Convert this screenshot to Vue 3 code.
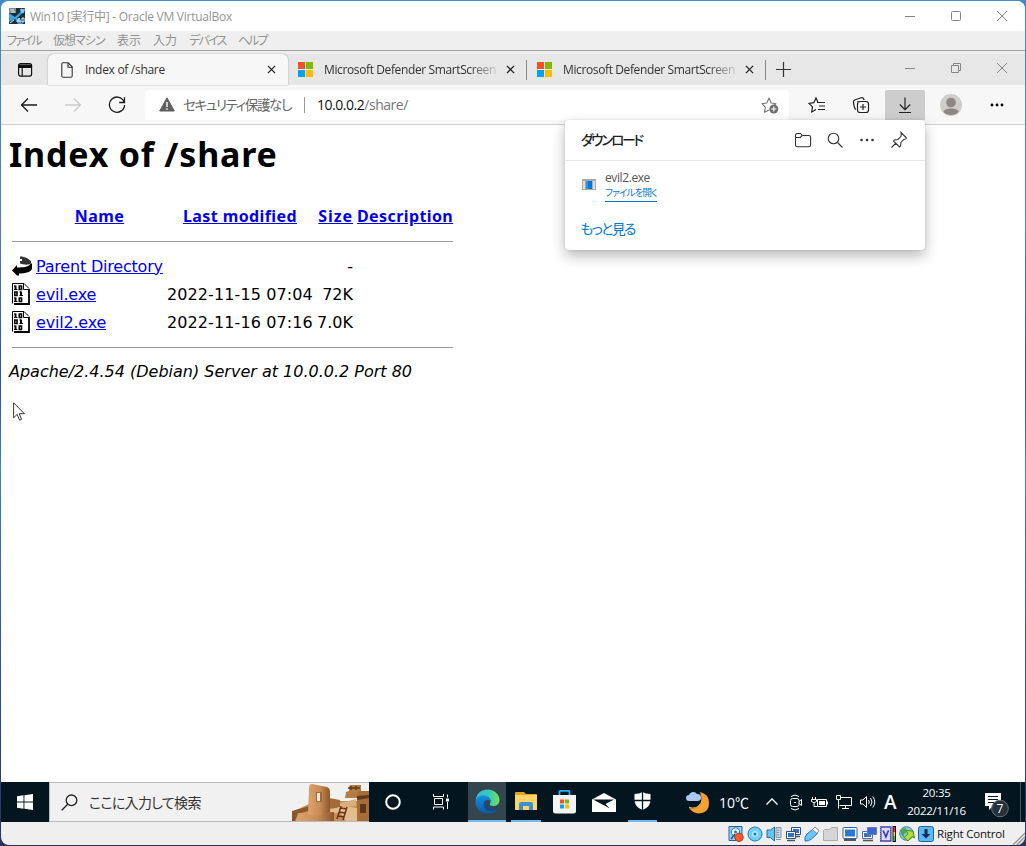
<template>
  <div class="desktop">
    <div class="vm-window">
      <header class="vm-title">
        <svg class="vm-logo" viewBox="0 0 16 16">
          <rect width="16" height="16" fill="#173040" />
          <path d="M0 5l6 4 10-9v3l-8 7 6 6H9l-3-5-6 3z" fill="#3f9fe0" />
          <path d="M0 0h7v5H0z" fill="#7d8b93" />
          <path d="M1 2h4M2 4h4M12 1l3 1M1 15l4-3" stroke="#e4edf2" />
          <path d="M8 14l2-4 2 4m-3-1h2m2-3v4h2v-4z" stroke="#dff1fb" fill="none" />
          <path d="M11 1h4v4h-3z" fill="#7fc4ef" />
        </svg>
        <span class="vm-name">Win10 [実行中] - Oracle VM VirtualBox</span>
        <div class="win-controls outer">
          <svg viewBox="0 0 12 12"><path d="M1 6.5h10" /></svg>
          <svg viewBox="0 0 12 12"><rect x="1.5" y="1.5" width="9" height="9" rx="1" /></svg>
          <svg viewBox="0 0 12 12"><path d="M1 1l10 10M11 1L1 11" /></svg>
        </div>
      </header>
      <nav class="vm-menu">
        <span v-for="(m, i) in menus" :key="m" :class="'menu-' + i">{{ m }}</span>
      </nav>

      <section class="browser">
        <div class="tab-strip">
          <div class="tab-actions">
            <svg width="16" height="16" viewBox="0 0 16 16" fill="none" stroke="#111" stroke-width="1.2">
              <rect x="1.6" y="1.6" width="13" height="12.5" rx="2" />
              <path d="M2 3h12v2.4H2z" fill="#111" />
              <path d="M5.2 5v9" />
            </svg>
          </div>
          <div class="tab active">
            <svg class="doc" width="14" height="16" viewBox="0 0 14 16" fill="none" stroke="#333" stroke-width="1.1">
              <path d="M3 .8h5.2l4 4V14a1.2 1.2 0 0 1-1.2 1.2H3A1.2 1.2 0 0 1 1.8 14V2A1.2 1.2 0 0 1 3 .8zM8 .8v4.4h4.2" />
            </svg>
            <span class="tab-text index">Index of /share</span>
            <svg class="tab-x" viewBox="0 0 10 10"><path d="M1 1l8 8M9 1L1 9" /></svg>
          </div>
          <div v-for="n in 2" :key="n" class="tab">
            <svg class="ms" width="15" height="15" viewBox="0 0 15 15">
              <path d="M0 0h7v7H0z" fill="#f25022" />
              <path d="M8 0h7v7H8z" fill="#7fba00" />
              <path d="M0 8h7v7H0z" fill="#00a4ef" />
              <path d="M8 8h7v7H8z" fill="#ffb900" />
            </svg>
            <span class="tab-text faded">Microsoft Defender SmartScreen</span>
            <svg class="tab-x" viewBox="0 0 10 10"><path d="M1 1l8 8M9 1L1 9" /></svg>
            <i class="tab-sep"></i>
          </div>
          <svg class="plus" viewBox="0 0 15 15"><path d="M7.5 0v15M0 7.5h15" /></svg>
          <div class="win-controls inner">
            <svg viewBox="0 0 12 12"><path d="M1 6.5h10" /></svg>
            <svg viewBox="0 0 12 12"><path d="M1.5 3.5h7v7h-7zM3.5 3.5v-2h7v7h-2" /></svg>
            <svg viewBox="0 0 12 12"><path d="M1 1l10 10M11 1L1 11" /></svg>
          </div>
        </div>

        <div class="toolbar">
          <svg class="nav" viewBox="0 0 18 18"><path d="M17 9H1.500M8 2.500L1.500 9 8 15.500" /></svg>
          <svg class="nav off" viewBox="0 0 18 18"><path d="M1 9h15.500M10 2.500L16.500 9 10 15.500" /></svg>
          <svg class="nav" viewBox="0 0 18 18"><path d="M16.200 6.200A7.600 7.600 0 1 0 16.600 9M16.500 1.200v5.300h-5.300" /></svg>
          <div class="address">
            <svg class="warn" width="16" height="15" viewBox="0 0 16 15">
              <path d="M8 .8L15.300 14H.7z" fill="#5f5f5f" stroke="#5f5f5f" stroke-linejoin="round" />
              <path d="M8 5v5M8 11.200v1.500" stroke="#fff" stroke-width="1.400" />
            </svg>
            <span class="insecure">セキュリティ保護なし</span>
            <i class="addr-sep"></i>
            <span class="url">10.0.0.2<em>/share/</em></span>
            <svg class="star-add" width="18" height="18" viewBox="0 0 18 18" fill="none" stroke="#777" stroke-width="1.100">
              <path d="M8 14l-4.500 2.300.9-5L1 7.700l4.800-.7L8 2l2.200 5 4.800.7-2 1.800" stroke-linejoin="round" />
              <circle cx="12.800" cy="13" r="4.500" fill="#6e6e6e" stroke="none" />
              <path d="M12.800 10.500v5M10.300 13h5" stroke="#fff" />
            </svg>
          </div>
          <div class="tool-buttons">
            <svg viewBox="0 0 18 18">
              <path d="M10 6.500L8 2 5.800 6.700 1 7.500l3.500 3.400-.8 5L8 13.400M9 6.500h8M11 10h6M10 13.500h7" />
            </svg>
            <svg viewBox="0 0 18 18">
              <path d="M4 13.500C2 12.500 2.200 10 1.600 7.500 1 5.300 1.300 4.300 3.200 3.700l6-1.900c1.700-.4 2.500.2 3 2.200M6 6V5" />
              <rect x="5.500" y="5.500" width="11" height="11" rx="2.500" />
              <path d="M11 8v6M8 11h6" />
            </svg>
            <div class="dl-button"><svg viewBox="0 0 18 18"><path d="M9 1.500v12M3.800 8.500L9 13.700l5.200-5.200M3 16.500h12" /></svg></div>
          </div>
          <svg class="avatar" viewBox="0 0 22 22">
            <circle cx="11" cy="11" r="11" fill="#cfcdca" />
            <circle cx="11" cy="8.500" r="4.800" fill="#8c8783" />
            <path d="M3.200 17.800c1.500-4.500 14.100-4.500 15.600 0a11 11 0 0 1-15.600 0z" fill="#8c8783" />
          </svg>
          <svg class="dots" viewBox="0 0 14 4"><circle cx="2" cy="2" r="1.400" /><circle cx="7" cy="2" r="1.400" /><circle cx="12" cy="2" r="1.400" /></svg>
        </div>

        <aside class="downloads">
          <div class="dl-head">
            <b>ダウンロード</b>
            <svg viewBox="0 0 18 18"><path d="M1.500 4.500c0-1.300.5-2 1.800-2h3.200l1.800 2h6.500c1.200 0 1.800.6 1.800 1.800V14c0 1.200-.6 1.800-1.800 1.800H3.300c-1.200 0-1.800-.6-1.800-1.800zM1.500 6.500h4.700l2-2" /></svg>
            <svg viewBox="0 0 18 18"><circle cx="7.500" cy="7.500" r="5.300" /><path d="M11.500 11.500l5 5" /></svg>
            <svg class="solid" viewBox="0 0 18 18"><circle cx="3.500" cy="9" r="1.300" /><circle cx="9" cy="9" r="1.300" /><circle cx="14.500" cy="9" r="1.300" /></svg>
            <svg viewBox="0 0 18 18"><path d="M11 1.500l5.500 5.500-1 1-1.500.2-3 3.300-.5 3.500-1 1-6-6 1-1 3.500-.5 3-3.200.2-1.800zM6 12l-4.500 4.500" /></svg>
          </div>
          <div class="dl-item">
            <svg width="14" height="11" viewBox="0 0 14 11">
              <path d="M0 0h14v11H0z" fill="#aaa" />
              <path d="M1 2h2v8H1zM11 2h2v8h-2z" fill="#ddd" />
              <path d="M4 2h6v8H4z" fill="#0078d7" />
              <path d="M4 2h2v8H4z" fill="#2c92e6" />
            </svg>
            <div class="dl-text">
              <span>evil2.exe</span>
              <a>ファイルを開く</a>
            </div>
          </div>
          <a class="more">もっと見る</a>
        </aside>

        <main class="page">
          <h1>Index of /share</h1>
          <div class="listing">
            <div class="row head">
              <span></span><a>Name</a><a class="mod">Last modified</a><a class="siz">Size</a><a class="desc">Description</a>
            </div>
            <hr />
            <div v-for="f in files" :key="f.name" class="row">
              <svg v-if="f.up" class="up" viewBox="0 0 20 22">
                <path d="M19 8l1 1v5c-2 3.500-7 4.500-13 4.500V20.500H5L0 15.500 5 10v2.500c7 0 12-.5 14-4.500z" fill="#000" />
                <path d="M8 1.500h2l5 1.500 4 3v2.500c-4 2-7 1-11 0V6h2V4H8z" fill="#333" />
              </svg>
              <svg v-else class="bin" viewBox="0 0 18 22" fill="none" stroke="#000">
                <path d="M.5.5h11l6 6v14H.5z" fill="#fff" stroke="none" />
                <path d="M.5 20.500V.5h11.500l5 5" />
                <path d="M11.500.5v6h5" />
                <path d="M17 6v15H2" stroke-width="1.800" />
                <path d="M3.500 2.500v4.500M9 8.500v4.500M3.500 14.500V19" stroke-width="2" />
                <path d="M2 3h1.500M2 6.500h3.500M7.500 9h1.500M7.500 12.500H11M2 15h1.500M2 18.500h3.500" />
                <path d="M7.300 3h2.200v3.500H7.300zM2.800 9H5v3.500H2.800zM7.300 15h2.200v3.500H7.300z" stroke-width="1.600" />
              </svg>
              <a>{{ f.name }}</a>
              <span class="mod">{{ f.modified }}</span>
              <span class="siz">{{ f.size }}</span>
            </div>
            <hr class="last" />
          </div>
          <address>Apache/2.4.54 (Debian) Server at 10.0.0.2 Port 80</address>
          <svg class="cursor" viewBox="0 0 12 19"><path d="M.6.800v15l3.600-3.400 2.400 5.800 2-.9-2.400-5.600h5.200z" fill="#fff" stroke="#222" stroke-width=".9" /></svg>
        </main>
      </section>

      <footer class="taskbar">
        <div class="start">
          <svg width="16" height="16" viewBox="0 0 16 16" fill="#fff"><path d="M0 2.200l6.500-.9v6.200H0zM7.400 1.200L16 0v7.500H7.400zM0 8.400h6.500v6.300L0 13.800zM7.400 8.400H16V16l-8.600-1.200z" /></svg>
        </div>
        <div class="search">
          <svg width="17" height="17" viewBox="0 0 17 17" fill="none" stroke="#222" stroke-width="1.300"><circle cx="10.500" cy="6.300" r="5.300" /><path d="M6.700 10.200L.7 16.200" /></svg>
          <span>ここに入力して検索</span>
          <svg class="village" width="78" height="38" viewBox="0 0 78 38">
            <defs>
              <linearGradient id="clay" x1="0" x2="1"><stop offset="0" stop-color="#dda46f" /><stop offset=".55" stop-color="#c88c55" /><stop offset="1" stop-color="#8d572b" /></linearGradient>
            </defs>
            <path d="M1 29l17-8 6-3h54v20H1z" fill="#c38b57" />
            <path d="M38 15l11 2v8H38z" fill="#a16a36" />
            <path d="M34 28l18-5 14 2v13H34z" fill="#e4bd8d" />
            <path d="M1 29l19-6v6l30 1 5 8H1z" fill="#c99059" />
            <path d="M1 28l18-5 4 3-16 5-3 7H1z" fill="#8a562d" />
            <path d="M7 30l36-1v9H5z" fill="url(#clay)" />
            <path d="M18 5q0-4 3-4l15 3q3 1 3 5v20q-11 6-22 2z" fill="url(#clay)" />
            <path d="M25 9h6v10h-6z" fill="#9c6a3d" />
            <path d="M26 10h3v8h-3z" fill="#f0e8dd" />
            <path d="M55 9l3-1V4q0-2 2-2h10v13H54z" fill="#b57b45" />
            <path d="M57 5h12M60 3v4M65 3v4" stroke="#633817" stroke-width="1.400" />
            <path d="M49 20l16-4v7l-16 2z" fill="#dcae79" />
            <path d="M66 11q0-3 4-3h8v30H66z" fill="#a76d38" />
            <path d="M66 13l12-1v3l-12 2z" fill="#64391a" />
            <path d="M69 21h6v9h-6z" fill="#603716" />
            <path d="M50 23l-4 13M56 24l-4 13M50 25l6 1M48 29l6 1M47 33l6 1" stroke="#6b3216" stroke-width="1.500" fill="none" />
          </svg>
        </div>
        <div class="task"><svg width="18" height="18" viewBox="0 0 18 18"><circle cx="9" cy="9" r="6.800" fill="none" stroke="#fff" stroke-width="2" /></svg></div>
        <div class="task wide"><svg width="18" height="18" viewBox="0 0 18 18" fill="none" stroke="#fff"><path d="M1.500 1v2.500h10V1M1.500 16.500v-2.500h10v2.500M2.500 5.500h8v6h-8zM15.500 1.500v3M15.500 9v7" /><path d="M14 5.500h3v3h-3z" fill="#fff" stroke="none" /></svg></div>
        <div class="task edge on">
          <svg width="25" height="25" viewBox="0 0 25 25">
            <defs>
              <linearGradient id="sea"><stop offset="0" stop-color="#35b7ef" /><stop offset=".6" stop-color="#37ccb0" /><stop offset="1" stop-color="#79df57" /></linearGradient>
              <linearGradient id="deep" x2="0" y2="1"><stop offset="0" stop-color="#1590df" /><stop offset="1" stop-color="#0c59a4" /></linearGradient>
            </defs>
            <path d="M.7 12C1 4 7 .5 12.500.500 20 .500 24.500 6 24.500 11c0 4-3 6-6.200 6-3 0-4.300-1.500-3.300-2.700C17 11 14 7 9 7 5 7 2 9 .7 12z" fill="url(#sea)" />
            <path d="M.5 13C1 8 5 6.200 9 6.500c4 .3 6.500 3 6.200 6-.8-2.300-5-2-6 .8-1.400 4 3.300 9 9 8.500l4.300-1.500C20 23.500 16.500 24.700 12.500 24.500 5 24 0 19 .5 13z" fill="url(#deep)" />
            <path d="M8.800 13c-1.800 5 3 10.500 9.400 9 2-.5 4-1.700 5-3-6 2.500-11.500.3-12.300-3.500-.3-1.500.1-2.600.9-3.500-1.400-.2-2.500.2-3 1z" fill="#0d4d91" />
          </svg>
        </div>
        <div class="task explorer on">
          <svg width="22" height="19" viewBox="0 0 22 19"><path d="M0 1q0-1 1-1h8l2 2h10q1 0 1 1v15H0z" fill="#e5a523" /><path d="M0 3h22v15H0z" fill="#fcd568" /><path d="M4 18v-6q0-2 2-2h10q2 0 2 2v6h-4v-4H8v4z" fill="#3f8fd0" /></svg>
        </div>
        <div class="task store">
          <svg width="23" height="24" viewBox="0 0 23 24"><path d="M6.500 6V2q0-1.200 1-1.200h8q1 0 1 1.200v4" fill="none" stroke="#2bb3ee" stroke-width="1.800" /><path d="M0 5h23v16q0 2.500-2.500 2.500h-18Q0 23.500 0 21z" fill="#f3f3f3" /><path d="M7 9.500h4v4H7z" fill="#f25022" /><path d="M12 9.500h4v4h-4z" fill="#7fba00" /><path d="M7 14.500h4v4H7z" fill="#00a4ef" /><path d="M12 14.500h4v4h-4z" fill="#ffb900" /></svg>
        </div>
        <div class="task mail">
          <svg width="24" height="19" viewBox="0 0 24 19"><path d="M0 6.500L12 0l12 6.500V19H0z" fill="#fff" /><path d="M1 6.500h21l-8.500 4.500 4.500 4.500z" fill="#031722" /></svg>
        </div>
        <div class="task shield on">
          <svg width="17" height="18" viewBox="0 0 17 18"><path d="M8.500 0q3 2 8 2v6q0 7-8 10Q.5 15 .5 8V2q5 0 8-2z" fill="#fff" /><path d="M8.500 0v18M0 8.500h17" stroke="#031722" stroke-width="1.300" /></svg>
        </div>
        <div class="weather">
          <svg width="24" height="23" viewBox="0 0 24 23">
            <path d="M14 1q9 2 9 11 0 8-7 10-8 2-13-5 7 2 10.500-3T14 1z" fill="#f5a033" />
            <path d="M3 16.500q7 2 11-3" stroke="#ffcb67" fill="none" />
            <path d="M3 10a3 3 0 0 1 0-6 4.500 4.500 0 0 1 8-1 3.500 3.500 0 0 1 1 7z" fill="#a9c6f5" />
          </svg>
          <span>10℃</span>
        </div>
        <div class="tray">
          <svg viewBox="0 0 18 18"><path d="M3.500 11.500L9 6l5.500 5.500" stroke-width="1.300" /></svg>
          <svg viewBox="0 0 18 18"><path d="M4 3.500q4-3 8 0M4 15.500q4 3 8 0M12 8.500l2.500-2v6l-2.500-2" /><rect x="3.500" y="5.500" width="8.500" height="8" rx="2" /><path d="M7 9.500h2" /></svg>
          <svg viewBox="0 0 18 18"><path d="M1.500 4v2M4.500 4v2M.5 6.500h5v2q-2.500 2.500-5 0zM3 9.500v4h3M6.500 6.500h9v7h-9zM16.500 8.500v3" /><path d="M8 8h6v4H8z" fill="#fff" stroke="none" /></svg>
          <svg viewBox="0 0 18 18"><path d="M6 4.500h10.500v8H4.500M10.500 12.500v3M7 15.500h7M1.500 2.500h4v4h-4zM3.500 6.500v9" /></svg>
          <svg viewBox="0 0 18 18"><path d="M1.500 7h2.500l3.500-3.500v11L4 11H1.500zM9.500 7q1.500 2 0 4M11.500 5q3 4 0 8M13.800 3.500q4 5.500 0 11" /></svg>
          <span class="ime">A</span>
        </div>
        <div class="clock"><span>20:35</span><span>2022/11/16</span></div>
        <div class="notice">
          <svg width="26" height="26" viewBox="0 0 26 26">
            <path d="M1 1h16v13H9l-4 4v-4H1z" fill="#fff" />
            <path d="M4 4.500h10M4 7.500h10M4 10.500h7" stroke="#04121e" />
            <circle cx="16" cy="16.500" r="8.300" fill="#27313a" stroke="#64707a" />
            <text x="16" y="20.500" text-anchor="middle">7</text>
          </svg>
        </div>
        <i class="peek"></i>
      </footer>

      <div class="status">
        <svg v-for="k in statusIcons" :key="k" :class="['st', 'st-' + k]" viewBox="0 0 16 16">
          <template v-if="k === 'disk'"><path d="M1 .5h13v14H1z" fill="#9ed0f3" stroke="#1a67a8" /><circle cx="7.500" cy="6" r="4.200" fill="#eef8ff" stroke="#1c72b8" /><circle cx="7.500" cy="6" r="1.400" fill="#1c72b8" /><path d="M3 13l4-5" stroke="#1c5486" stroke-width="1.500" /><circle cx="11" cy="11.300" r="4.200" fill="#f05b32" stroke="#b73b1b" /></template>
          <template v-else-if="k === 'cd'"><circle cx="8" cy="8" r="7" fill="#74cdf3" stroke="#167bb5" /><circle cx="8" cy="8" r="3" fill="#b6eaff" /><circle cx="8" cy="8" r="1.500" fill="#167bb5" /></template>
          <template v-else-if="k === 'audio'"><path d="M10 1.500h5v10h-5zM10 13.500h5M11 4h2M11 6.500h2M11 9h2" fill="#c7d4dd" stroke="#8798a4" /><path d="M1 4h3.500l4-3v14l-4-3.500H1z" fill="#69c4f2" stroke="#236b9f" /></template>
          <template v-else-if="k === 'net'"><path d="M6.500 1.500h9v7h-9z" fill="#fff" stroke="#344d78" /><path d="M8 3h6v4H8z" fill="#2f72d0" /><path d="M1.500 5.500h9v7h-9z" fill="#fff" stroke="#344d78" /><path d="M3 7h6v4H3z" fill="#2f72d0" /><path d="M2 14.500h8M11 10.500h4" stroke="#555" stroke-width="1.600" /></template>
          <template v-else-if="k === 'usb'"><path d="M1 15q-1-4 2-7l6-5 4.500 4.500-6 5.500q-3 2.500-6.500 2z" fill="#6bc5f5" stroke="#2577ae" /><path d="M8.500 3.500L11 1l4 3.500-2 3z" fill="#f6f6f6" stroke="#888" /></template>
          <template v-else-if="k === 'share'"><path d="M.5 4.500l1-1h5l2-2h6v13H.5z" fill="#d5d5d5" stroke="#aaa" /></template>
          <template v-else-if="k === 'display'"><rect x="1" y="1.500" width="14" height="11" rx="1" fill="#fff" stroke="#38619b" /><path d="M3 3.500h10v7H3z" fill="#2779d4" /><path d="M2 14h12" stroke="#555" stroke-width="2" /></template>
          <template v-else-if="k === 'record'"><path d="M1.500 5.500h10v7h-10z" fill="#fff" stroke="#5a6c96" /><path d="M3 7h7v4H3z" fill="#2f72d0" /><path d="M6.500 1.500h9v7h-9z" fill="#3b67d6" stroke="#6b7db0" /><path d="M2 14.500h10" stroke="#555" stroke-width="1.600" /></template>
          <template v-else-if="k === 'cpu'"><rect x=".8" y="1" width="10" height="14" fill="#d9dcf8" stroke="#4545a7" stroke-width="1.500" /><path d="M.5 1v14M11 1v14" stroke="#8f92cf" stroke-dasharray="1 1" /><path d="M3.200 4.500L5.900 11l2.600-6.500" fill="none" stroke="#3333a5" stroke-width="1.600" /><path d="M12.500 0H16v16h-3.500z" fill="#111" /><path d="M13.500 1H15v5h-1.500z" fill="#e33" /><path d="M13.500 6H15v4h-1.500z" fill="#fd0" /><path d="M13.500 10H15v5h-1.500z" fill="#3c3" /></template>
          <template v-else-if="k === 'mouse'"><circle cx="7.500" cy="7.500" r="6.800" fill="#8ac7ea" stroke="#3480aa" /><path d="M2 3l5-1 1 4-3 2v4L2 8z" fill="#4aa850" /><path d="M7 4.500l7 .5 1.500 7-2.500-1.500-4 4.500-4-3.500 4-3.500z" fill="#b5de30" stroke="#4c8a24" /></template>
          <template v-else><rect x=".5" y=".5" width="15" height="15" rx="2" fill="#5db9f3" stroke="#1e659d" /><path d="M8 3v6" stroke="#092d54" stroke-width="3" /><path d="M3.500 8h9L8 12.500z" fill="#092d54" /></template>
        </svg>
        <span>Right Control</span>
        <svg class="grip" viewBox="0 0 14 14"><path d="M1 14L14 1M5 14l9-9M9 14l5-5" stroke="#999" stroke-width="1.500" /></svg>
      </div>
    </div>
  </div>
</template>

<script setup>
const menus = ['ファイル', '仮想マシン', '表示', '入力', 'デバイス', 'ヘルプ'];

const files = [
  { name: 'Parent Directory', modified: '', size: '-', up: true },
  { name: 'evil.exe', modified: '2022-11-15 07:04', size: '72K' },
  { name: 'evil2.exe', modified: '2022-11-16 07:16', size: '7.0K' }
];

const statusIcons = ['disk', 'cd', 'audio', 'net', 'usb', 'share', 'display', 'record', 'cpu', 'mouse', 'key'];
</script>

<style>
body {
  margin: 0;
  overflow: hidden;
}
</style>

<style scoped>
.desktop {
  box-sizing: border-box;
  width: 1026px;
  height: 846px;
  padding: 1px;
  background: linear-gradient(180deg, #3f8cc8 0, #4a86bd 25%, #2851b0 45%, #3b86b4 55%, #2c4fa8 80%, #26345c 100%);
  font-family: "Open Sans", "Noto Sans CJK JP", sans-serif;
  font-feature-settings: "palt";
}
svg {
  display: block;
  flex: none;
}
span, b, a {
  white-space: nowrap;
}
.vm-window {
  height: 844px;
  display: flex;
  flex-direction: column;
  background: #efefef;
  border-radius: 8px;
  overflow: hidden;
}
.vm-title {
  height: 30px;
  display: flex;
  align-items: center;
  background: #fff;
  padding-left: 8px;
  color: #949494;
  font-size: 12px;
}
.vm-logo {
  width: 16px;
  height: 16px;
  margin-right: 5px;
}
.vm-name {
  letter-spacing: -0.25px;
  padding-bottom: 1px;
}
.win-controls {
  margin-left: auto;
  display: flex;
  gap: 34px;
  padding-right: 17px;
}
.win-controls svg {
  width: 12px;
  height: 12px;
  fill: none;
  stroke: #858585;
}
.outer { padding-bottom: 1px; }
.vm-menu {
  height: 19px;
  display: flex;
  gap: 12px;
  align-items: center;
  padding-left: 6px;
  border-bottom: 1px solid #a0a0a0;
  color: #929292;
  font-size: 12px;
  line-height: 19px;
}
.vm-menu span { width: 24px; }
.vm-menu .menu-0 { width: 34px; letter-spacing: -2px; }
.vm-menu .menu-1 { width: 52px; letter-spacing: -1px; }
.vm-menu .menu-4 { width: 37px; letter-spacing: -1.7px; }
.vm-menu .menu-5 { letter-spacing: -2px; }

.browser {
  height: 731px;
  position: relative;
}
.tab-strip {
  height: 34px;
  display: flex;
  box-sizing: border-box;
  border-top: 3px solid #efefef;
  background: #e7e7e7;
  align-items: center;
}
.tab-actions {
  width: 47px;
  padding-left: 16px;
  box-sizing: border-box;
}
.tab {
  width: 239px;
  height: 31px;
  box-sizing: border-box;
  display: flex;
  align-items: center;
  padding-left: 10px;
  font-size: 12px;
  color: #333;
}
.tab.active {
  width: 240px;
  padding-left: 12px;
  background: #f7f7f7;
  border-radius: 6px 6px 0 0;
  box-shadow: 0 0 2px rgba(0, 0, 0, 0.3);
}
.tab .ms { margin-right: 11px; }
.tab .doc { margin-right: 11px; }
.tab-text {
  width: 173px;
  letter-spacing: -0.38px;
}
.tab-text.index {
  width: 180px;
  letter-spacing: -0.3px;
}
.tab-text.faded {
  -webkit-mask-image: linear-gradient(90deg, #000 145px, transparent 177px);
  mask-image: linear-gradient(90deg, #000 145px, transparent 177px);
}
.tab-x {
  width: 9px;
  height: 9px;
  margin-left: 9px;
  fill: none;
  stroke: #222;
  stroke-width: 1.4;
}
.active .tab-x { margin-left: 2px; }
.tab-sep {
  width: 1px;
  height: 20px;
  margin-left: 11px;
  background: #888;
}
.plus {
  width: 15px;
  height: 15px;
  margin-left: 10px;
  stroke: #333;
  stroke-width: 1.2;
}
.inner { padding-bottom: 3px; }

.toolbar {
  height: 40px;
  box-sizing: border-box;
  display: flex;
  align-items: center;
  padding-left: 19px;
  background: #f7f7f7;
  border-bottom: 1px solid #cfcfcf;
}
.nav {
  width: 18px;
  height: 18px;
  margin-right: 26px;
  fill: none;
  stroke: #1b1b1b;
  stroke-width: 1.3;
}
.nav.off { stroke: #ccc; }
.nav:nth-child(3) { margin-right: 19px; }
.address {
  width: 644px;
  height: 30px;
  box-sizing: border-box;
  display: flex;
  align-items: center;
  padding: 0 10px 0 14px;
  border-radius: 3px;
  background: #fff;
  font-size: 14px;
  color: #666;
}
.insecure {
  width: 110px;
  margin-left: 8px;
  padding-bottom: 2px;
  font-size: 13.5px;
  letter-spacing: -1.35px;
}
.addr-sep {
  width: 1px;
  height: 16px;
  margin: 0 12px 0 11px;
  background: #999;
}
.url {
  color: #111;
  letter-spacing: -0.47px;
}
.url em {
  font-style: normal;
  color: #767676;
}
.star-add { margin-left: auto; }
.tool-buttons {
  display: flex;
  align-items: center;
  margin-left: 19px;
}
.tool-buttons svg {
  width: 18px;
  height: 18px;
  margin-right: 26px;
  fill: none;
  stroke: #222;
  stroke-width: 1.2;
}
.tool-buttons svg + svg { margin-right: 15px; }
.tool-buttons .dl-button {
  width: 40px;
  height: 30px;
  display: flex;
  align-items: center;
  justify-content: center;
  border-radius: 2px 2px 0 0;
  background: #cdcdcd;
}
.dl-button svg { margin: 0; }
.avatar {
  width: 22px;
  height: 22px;
  margin-left: 15px;
}
.dots {
  width: 14px;
  margin-left: 28px;
}

.downloads {
  position: absolute;
  left: 564px;
  top: 69px;
  width: 360px;
  height: 130px;
  background: #fff;
  border-radius: 4px;
  box-shadow: 0 6px 14px rgba(0, 0, 0, 0.28), 0 0 2px rgba(0, 0, 0, 0.15);
}
.dl-head {
  height: 40px;
  display: flex;
  align-items: center;
  gap: 14px;
  padding: 0 17px 0 16px;
  border-bottom: 1px solid #e5e5e5;
}
.dl-head b {
  margin-right: auto;
  padding-bottom: 2px;
  font-size: 13.5px;
  font-weight: 500;
  letter-spacing: -2.1px;
  color: #222;
}
.dl-head svg {
  width: 18px;
  height: 18px;
  fill: none;
  stroke: #333;
  stroke-width: 1.1;
}
.dl-head .solid {
  fill: #333;
  stroke: none;
}
.dl-item {
  display: flex;
  align-items: flex-start;
  padding: 9px 0 0 17px;
}
.dl-item svg { margin-top: 9px; }
.dl-text {
  display: flex;
  flex-direction: column;
  align-items: flex-start;
  margin-left: 9px;
  font-size: 12px;
  line-height: 16px;
  letter-spacing: -0.4px;
  color: #555;
}
.dl-text a {
  width: 52px;
  height: 15px;
  font-size: 9.5px;
  line-height: 14px;
  letter-spacing: -0.85px;
  color: #0078d4;
  border-bottom: 1px solid #0078d4;
}
.more {
  display: block;
  margin: 17px 0 0 15px;
  font-size: 14px;
  line-height: 20px;
  letter-spacing: -1.7px;
  color: #0078d4;
}

.page {
  height: 657px;
  box-sizing: border-box;
  padding: 7px 8px;
  background: #fff;
  color: #000;
  font-family: "DejaVu Sans", sans-serif;
  font-size: 16px;
}
h1 {
  margin: 0;
  font-family: "Noto Sans", sans-serif;
  font-size: 34px;
  line-height: 44px;
  letter-spacing: 0.8px;
  white-space: nowrap;
}
.listing {
  width: 441px;
  margin: 26px 0 0 3px;
}
.row {
  display: grid;
  grid-template-columns: 20px 127px 146px 36px 96px;
  column-gap: 4px;
  height: 28px;
  align-items: center;
}
.row.head {
  font-family: "Noto Sans", sans-serif;
  font-weight: 700;
  text-align: center;
}
.row a {
  color: #0000ee;
  text-decoration: underline;
  letter-spacing: -0.2px;
}
.row.head a { letter-spacing: 0.4px; }
.row.head .siz { letter-spacing: 0.9px; }
.row .mod { letter-spacing: 0.1px; }
.row .siz { text-align: right; }
.row .desc { text-align: left; }
.bin {
  width: 18px;
  height: 22px;
}
.up {
  width: 20px;
  height: 22px;
}
.listing hr {
  height: 1px;
  margin: 11px 0 10px;
  border: 0;
  background: #999;
}
address {
  margin-top: 12px;
  line-height: 24px;
}
.cursor {
  width: 12px;
  height: 19px;
  margin: 18px 0 0 4px;
}

.taskbar {
  height: 40px;
  display: flex;
  background: #031620;
  color: #fff;
}
.start {
  width: 48px;
  display: flex;
  align-items: center;
  justify-content: center;
}
.search {
  width: 320px;
  box-sizing: border-box;
  display: flex;
  align-items: center;
  padding-left: 11px;
  border: 1px solid #bbb;
  border-right: 0;
  background: #f1f1f1;
  color: #333;
  font-size: 14px;
}
.search span {
  margin-left: 11px;
  padding-bottom: 1px;
  letter-spacing: -0.7px;
}
.search .village { margin-left: auto; }
.task {
  width: 48px;
  box-sizing: border-box;
  display: flex;
  align-items: center;
  justify-content: center;
}
.task.on { border-bottom: 2px solid #76b9ed; }
.task.edge {
  width: 38px;
  margin-left: 3px;
  background: #33454d;
}
.task.explorer {
  width: 30px;
  margin-left: 5px;
}
.task.store {
  width: 30px;
  margin-left: 8px;
}
.task.mail {
  width: 30px;
  margin-left: 10px;
}
.task.shield {
  width: 29px;
  margin-left: 9px;
}
.weather {
  display: flex;
  align-items: center;
  margin-left: 29px;
  width: 77px;
  font-size: 14px;
}
.weather span { margin-left: 9px; }
.tray {
  display: flex;
  align-items: center;
  gap: 6px;
}
.tray svg {
  width: 18px;
  height: 18px;
  fill: none;
  stroke: #fff;
}
.ime {
  margin-left: 1px;
  font-size: 19px;
  font-weight: 600;
}
.clock {
  width: 60px;
  margin-left: 10px;
  display: flex;
  flex-direction: column;
  align-items: center;
  justify-content: center;
  font-size: 11.5px;
  line-height: 18px;
  letter-spacing: -0.25px;
}
.notice {
  margin: 10px 0 0 17px;
}
.notice text {
  fill: #fff;
  font: 12px "Open Sans", sans-serif;
}
.peek {
  width: 1px;
  margin-left: auto;
  margin-right: 4px;
  background: #4b5860;
}

.status {
  height: 23px;
  display: flex;
  align-items: center;
  gap: 3px;
  padding-left: 727px;
  color: #111;
  font-size: 11.5px;
}
.st {
  width: 16px;
  height: 16px;
}
.status span { letter-spacing: -0.2px; }
.grip {
  width: 13px;
  height: 13px;
  margin-left: auto;
  align-self: flex-end;
}
</style>
